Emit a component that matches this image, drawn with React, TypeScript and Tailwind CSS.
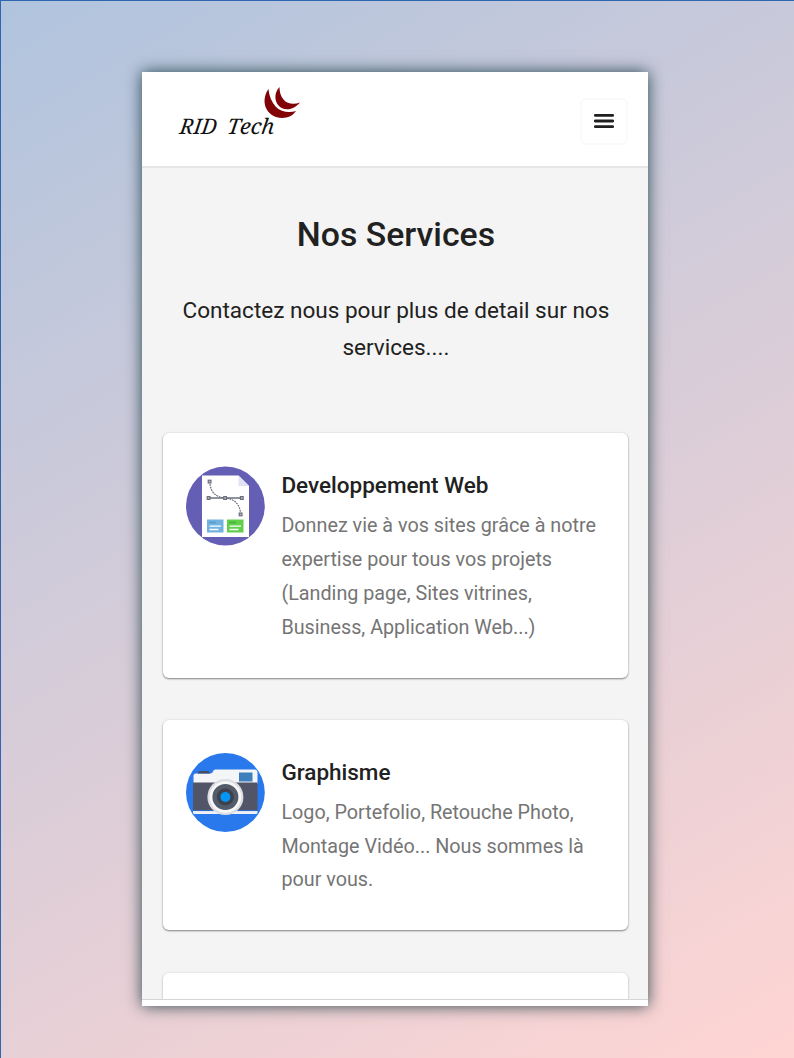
import type { ReactNode } from "react";

function Logo() {
  return (
    <svg width="130" height="60" viewBox="0 0 130 60" className="block" aria-label="RID Tech">
      <g fill="#820306">
        <path d="M93.500 5C87 14 88 28 101 33C109 35.500 117 33 121 27C114 29 106 28 101 23C96.500 18 94 12 93.500 5Z" />
        <path d="M104.500 3C98.500 9 99 19.500 106.500 24C113 27 120 24.500 125 18.500C119 21 112 20 108.500 15.500C105.500 12 104.500 8 104.500 3Z" />
      </g>
      <g fill="#101010" fontFamily="'Noto Serif','Liberation Serif',serif" fontStyle="italic" fontSize="21.500">
        <text transform="translate(4 50) skewX(-7)" x="0" y="0" textLength="37" lengthAdjust="spacingAndGlyphs">RID</text>
        <text transform="translate(51.500 50) skewX(-7)" x="0" y="0" textLength="47" lengthAdjust="spacingAndGlyphs">Tech</text>
      </g>
    </svg>
  );
}

function DesignIcon() {
  return (
    <svg viewBox="0 0 80 80" className="block size-20">
      <circle cx="40.400" cy="40" r="39.400" fill="#655eb5" />
      <path d="M17 9.500H53.500L64 20V71H17Z" fill="#fff" />
      <path d="M53.500 9.500V20H64Z" fill="#e1e2f6" />
      <path d="M25 18C26 26 30 31 40 32S54 38 55.500 46" fill="none" stroke="#6b6f7c" strokeWidth="1.200" strokeDasharray="1.800 0.900" />
      <path d="M23.500 32H57" stroke="#6b6f7c" strokeWidth="1.300" />
      <g fill="#b5b8c0" stroke="#666a77" strokeWidth="1.100">
        <rect x="23.200" y="14.200" width="2.800" height="2.800" />
        <rect x="22.200" y="30.600" width="2.800" height="2.800" />
        <rect x="38.700" y="30.600" width="2.800" height="2.800" />
        <rect x="55.400" y="30.600" width="2.800" height="2.800" />
        <rect x="54.200" y="47" width="2.800" height="2.800" />
      </g>
      <rect x="22" y="53.500" width="16.500" height="13" fill="#71b2df" />
      <rect x="42" y="53.500" width="16.500" height="13" fill="#61cf4b" />
      <path d="M24 56.500H31" stroke="#569bc8" strokeWidth="1.500" />
      <path d="M44 56.500H51" stroke="#43b139" strokeWidth="1.500" />
      <path d="M24.500 60.200H36M24.500 63.500H33.500M44.500 60.200H56M44.500 63.500H53.500" stroke="#fff" strokeWidth="1.300" />
    </svg>
  );
}

function CameraIcon() {
  return (
    <svg viewBox="0 0 80 80" className="block size-20">
      <circle cx="40.400" cy="39.500" r="39.400" fill="#2979ed" />
      <path d="M8.500 23Q8.500 20.500 11 20.500H25Q27.500 20.500 28 18.500Q28.500 16.500 30.500 16.500H69.500Q72.500 16.500 72.500 19.500V31H8.500Z" fill="#f3f5f7" />
      <path d="M12.500 20.500L13.300 19Q13.800 18 15 18H23Q24.300 18 25 20.500Z" fill="#474e63" />
      <rect x="8" y="29.500" width="64.500" height="28.500" fill="#525467" />
      <path d="M8 58H72.500V59.500Q72.500 61 71 61H9.500Q8 61 8 59.500Z" fill="#eff1f4" />
      <path d="M8 57.600H72.500" stroke="#2979ed" strokeWidth="0.800" />
      <rect x="54" y="19.500" width="13.500" height="9" fill="#3d80bb" />
      <circle cx="40.400" cy="44" r="18" fill="#dedee2" />
      <circle cx="40.400" cy="44" r="15.800" fill="#f7f7f8" />
      <circle cx="40.400" cy="44" r="13" fill="#545b69" />
      <circle cx="40.400" cy="44" r="8.500" fill="#3e424d" />
      <circle cx="40.400" cy="44" r="5" fill="#0595f3" />
    </svg>
  );
}

function ServiceCard({ icon, title, lines }: { icon: ReactNode; title: string; lines: string[] }) {
  return (
    <article className="flex gap-4 rounded-[6px] bg-white pt-[33px] pr-5 pb-[33px] pl-[22px] shadow-[0_1px_2px_rgba(0,0,0,0.45),0_0_3px_rgba(0,0,0,0.08)]">
      <div className="shrink-0">{icon}</div>
      <div className="pt-[3px] whitespace-nowrap">
        <h2 className="text-[22.500px] leading-[32px] font-medium text-[#212121]">{title}</h2>
        <p className="mt-[8px] text-[19.750px] leading-[33.900px] text-[#757575]">
          {lines.map((line) => (
            <span key={line} className="block">{line}</span>
          ))}
        </p>
      </div>
    </article>
  );
}

export default function App() {
  return (
    <div className="flex h-[1058px] w-[794px] items-start overflow-hidden border-t border-l border-[#2f66b0] bg-[linear-gradient(150deg,#b0c4de,#ffd5d3)] pt-[71px] pl-[141px] font-['Roboto',sans-serif] text-[#212121]">
      <main className="flex h-[934px] w-[506px] flex-col bg-white shadow-[0_0_15px_rgba(0,40,45,0.8)]">
        <header className="flex h-24 shrink-0 items-start justify-between border-b-2 border-[#e5e5e5] pr-5 pl-[33px]">
          <div className="pt-3"><Logo /></div>
          <button aria-label="Menu" className="mt-[26px] flex h-[47px] w-12 items-center justify-center rounded-[6px] border-2 border-[#fafafa] pr-px pb-px">
            <svg width="20" height="16" viewBox="0 0 20 16" className="block">
              <path d="M1.300 2.300H18.700M1.300 8H18.700M1.300 13.700H18.700" stroke="#202020" strokeWidth="2.800" strokeLinecap="round" />
            </svg>
          </button>
        </header>
        <section className="h-[831px] shrink-0 overflow-hidden bg-[#f4f4f4] pr-[19.600px] pl-[21.400px]">
          <h1 className="pt-[45px] text-center text-[33.800px] leading-[44px] font-medium">Nos Services</h1>
          <p className="mt-[35px] text-center text-[22.550px] leading-[37px]">
            Contactez nous pour plus de detail sur nos<br />services....
          </p>
          <div className="mt-[67px] flex flex-col gap-[42px]">
            <ServiceCard
              icon={<DesignIcon />}
              title="Developpement Web"
              lines={["Donnez vie à vos sites grâce à notre", "expertise pour tous vos projets", "(Landing page, Sites vitrines,", "Business, Application Web...)"]}
            />
            <ServiceCard
              icon={<CameraIcon />}
              title="Graphisme"
              lines={["Logo, Portefolio, Retouche Photo,", "Montage Vidéo... Nous sommes là", "pour vous."]}
            />
            <div className="mt-px h-20 rounded-[6px] bg-white shadow-[0_1px_2px_rgba(0,0,0,0.3),0_0_3px_rgba(0,0,0,0.08)]" />
          </div>
        </section>
        <footer className="h-[7px] shrink-0 border-t border-[#d5d5d5] bg-white" />
      </main>
    </div>
  );
}
